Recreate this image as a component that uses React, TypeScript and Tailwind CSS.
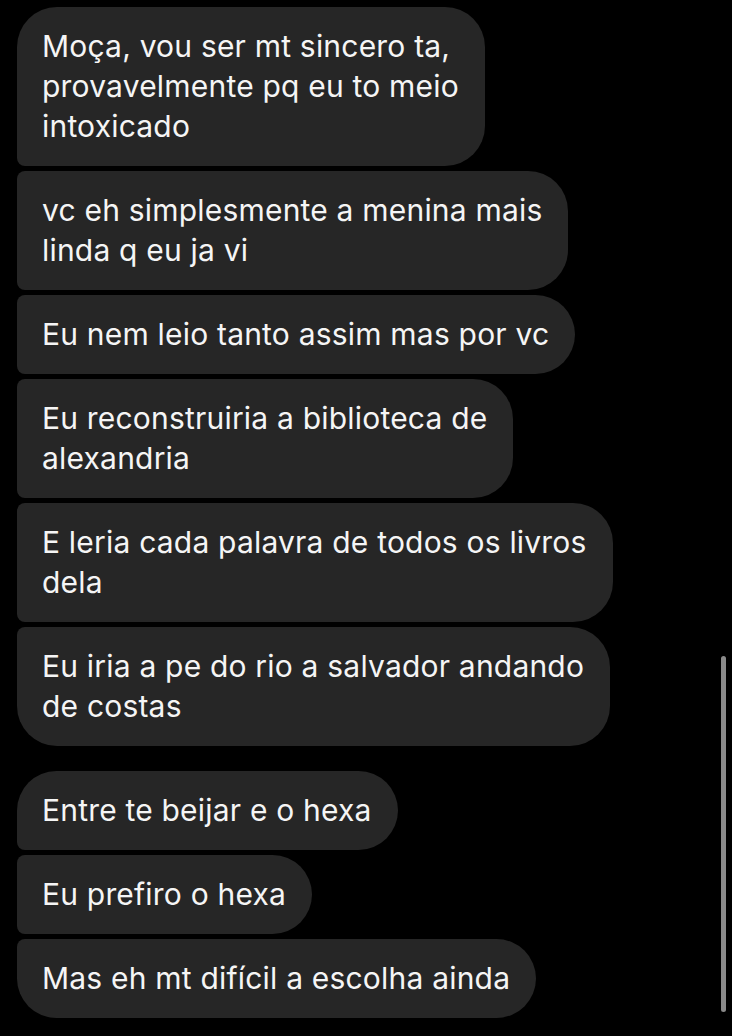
import React from 'react';

type Bubble = { lines: string[]; first?: boolean; last?: boolean };

const groups: Bubble[][] = [
  [
    { lines: ['Moça, vou ser mt sincero ta,', 'provavelmente pq eu to meio', 'intoxicado'], first: true },
    { lines: ['vc eh simplesmente a menina mais', 'linda q eu ja vi'] },
    { lines: ['Eu nem leio tanto assim mas por vc'] },
    { lines: ['Eu reconstruiria a biblioteca de', 'alexandria'] },
    { lines: ['E leria cada palavra de todos os livros', 'dela'] },
    { lines: ['Eu iria a pe do rio a salvador andando', 'de costas'], last: true },
  ],
  [
    { lines: ['Entre te beijar e o hexa'], first: true },
    { lines: ['Eu prefiro o hexa'] },
    { lines: ['Mas eh mt difícil a escolha ainda'], last: true },
  ],
];

const MessageBubble: React.FC<{ bubble: Bubble }> = ({ bubble }) => {
  const tl = bubble.first ? 'rounded-tl-[40px]' : 'rounded-tl-[8px]';
  const bl = bubble.last ? 'rounded-bl-[40px]' : 'rounded-bl-[8px]';
  return (
    <div
      className={`w-fit bg-[#262626] text-[#f5f5f5] rounded-r-[40px] ${tl} ${bl} pl-[25px] pr-[26px] pt-[19px] pb-[20px] text-[30px] leading-[40px] tracking-[0.2px] whitespace-nowrap`}
    >
      {bubble.lines.map((line, i) => (
        <div key={i}>{line}</div>
      ))}
    </div>
  );
};

export default function App() {
  return (
    <div
      className="relative w-[732px] h-[1036px] bg-black overflow-hidden"
      style={{ fontFamily: 'Inter, "Liberation Sans", Arial, sans-serif' }}
    >
      <div className="flex flex-col gap-[25px] pl-[17px] pt-[7px]">
        {groups.map((group, gi) => (
          <div key={gi} className="flex flex-col gap-[5px]">
            {group.map((b, bi) => (
              <MessageBubble key={bi} bubble={b} />
            ))}
          </div>
        ))}
      </div>

      {/* scroll indicator */}
      <div className="absolute left-[721px] top-[656px] w-[5px] h-[356px] rounded-full bg-[#8a8a8a]" />
    </div>
  );
}
